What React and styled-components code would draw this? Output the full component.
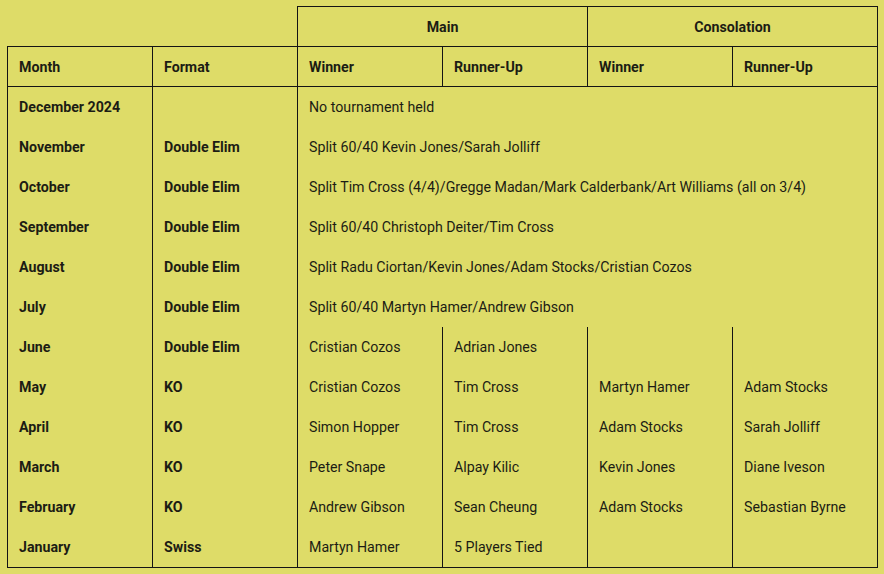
import React from 'react';
import styled, { createGlobalStyle } from 'styled-components';

const GlobalStyle = createGlobalStyle`
  html, body {
    margin: 0;
    padding: 0;
    background: #dedc68;
  }
  body {
    font-family: Roboto, "Liberation Sans", sans-serif;
    color: #1c1c14;
  }
`;

const Page = styled.div`
  padding: 6px 7px;
`;

const Table = styled.table`
  border-collapse: collapse;
  border-spacing: 0;
  table-layout: fixed;
  width: 871px;
  font-size: 14.2px;
`;

const Col = styled.col`
  width: 145px;
`;

const Row = styled.tr`
  height: ${({ $last }) => ($last ? '41px' : '40px')};
`;

const GroupHead = styled.th`
  border: 1px solid #141414;
  text-align: center;
  font-weight: 700;
  padding: 0;
`;

const Blank = styled.th`
  border: none;
  padding: 0;
`;

const Head = styled.th`
  border: 1px solid #141414;
  text-align: left;
  font-weight: 700;
  padding: 0 11px;
`;

const Cell = styled.td`
  padding: 0 11px;
  font-weight: ${({ $bold }) => ($bold ? 700 : 400)};
  white-space: nowrap;
  border-left: 1px solid #141414;
  border-right: 1px solid #141414;
  border-bottom: ${({ $last }) => ($last ? '1px solid #141414' : 'none')};
`;

const split = [
  ['December 2024', '', 'No tournament held'],
  ['November', 'Double Elim', 'Split 60/40 Kevin Jones/Sarah Jolliff'],
  ['October', 'Double Elim', 'Split Tim Cross (4/4)/Gregge Madan/Mark Calderbank/Art Williams (all on 3/4)'],
  ['September', 'Double Elim', 'Split 60/40 Christoph Deiter/Tim Cross'],
  ['August', 'Double Elim', 'Split Radu Ciortan/Kevin Jones/Adam Stocks/Cristian Cozos'],
  ['July', 'Double Elim', 'Split 60/40 Martyn Hamer/Andrew Gibson'],
];

const results = [
  ['June', 'Double Elim', 'Cristian Cozos', 'Adrian Jones', '', ''],
  ['May', 'KO', 'Cristian Cozos', 'Tim Cross', 'Martyn Hamer', 'Adam Stocks'],
  ['April', 'KO', 'Simon Hopper', 'Tim Cross', 'Adam Stocks', 'Sarah Jolliff'],
  ['March', 'KO', 'Peter Snape', 'Alpay Kilic', 'Kevin Jones', 'Diane Iveson'],
  ['February', 'KO', 'Andrew Gibson', 'Sean Cheung', 'Adam Stocks', 'Sebastian Byrne'],
  ['January', 'Swiss', 'Martyn Hamer', '5 Players Tied', '', ''],
];

const App = () => {
  return (
    <Page>
      <GlobalStyle />
      <Table>
        <colgroup>
          {[0, 1, 2, 3, 4, 5].map((i) => (
            <Col key={i} />
          ))}
        </colgroup>
        <thead>
          <Row>
            <Blank colSpan={2} />
            <GroupHead colSpan={2}>Main</GroupHead>
            <GroupHead colSpan={2}>Consolation</GroupHead>
          </Row>
          <Row>
            <Head>Month</Head>
            <Head>Format</Head>
            <Head>Winner</Head>
            <Head>Runner-Up</Head>
            <Head>Winner</Head>
            <Head>Runner-Up</Head>
          </Row>
        </thead>
        <tbody>
          {split.map(([month, format, note]) => (
            <Row key={month}>
              <Cell $bold>{month}</Cell>
              <Cell $bold>{format}</Cell>
              <Cell colSpan={4}>{note}</Cell>
            </Row>
          ))}
          {results.map((r, i) => {
            const last = i === results.length - 1;
            return (
              <Row key={r[0]} $last={last}>
                <Cell $bold $last={last}>{r[0]}</Cell>
                <Cell $bold $last={last}>{r[1]}</Cell>
                <Cell $last={last}>{r[2]}</Cell>
                <Cell $last={last}>{r[3]}</Cell>
                <Cell $last={last}>{r[4]}</Cell>
                <Cell $last={last}>{r[5]}</Cell>
              </Row>
            );
          })}
        </tbody>
      </Table>
    </Page>
  );
};

export default App;
